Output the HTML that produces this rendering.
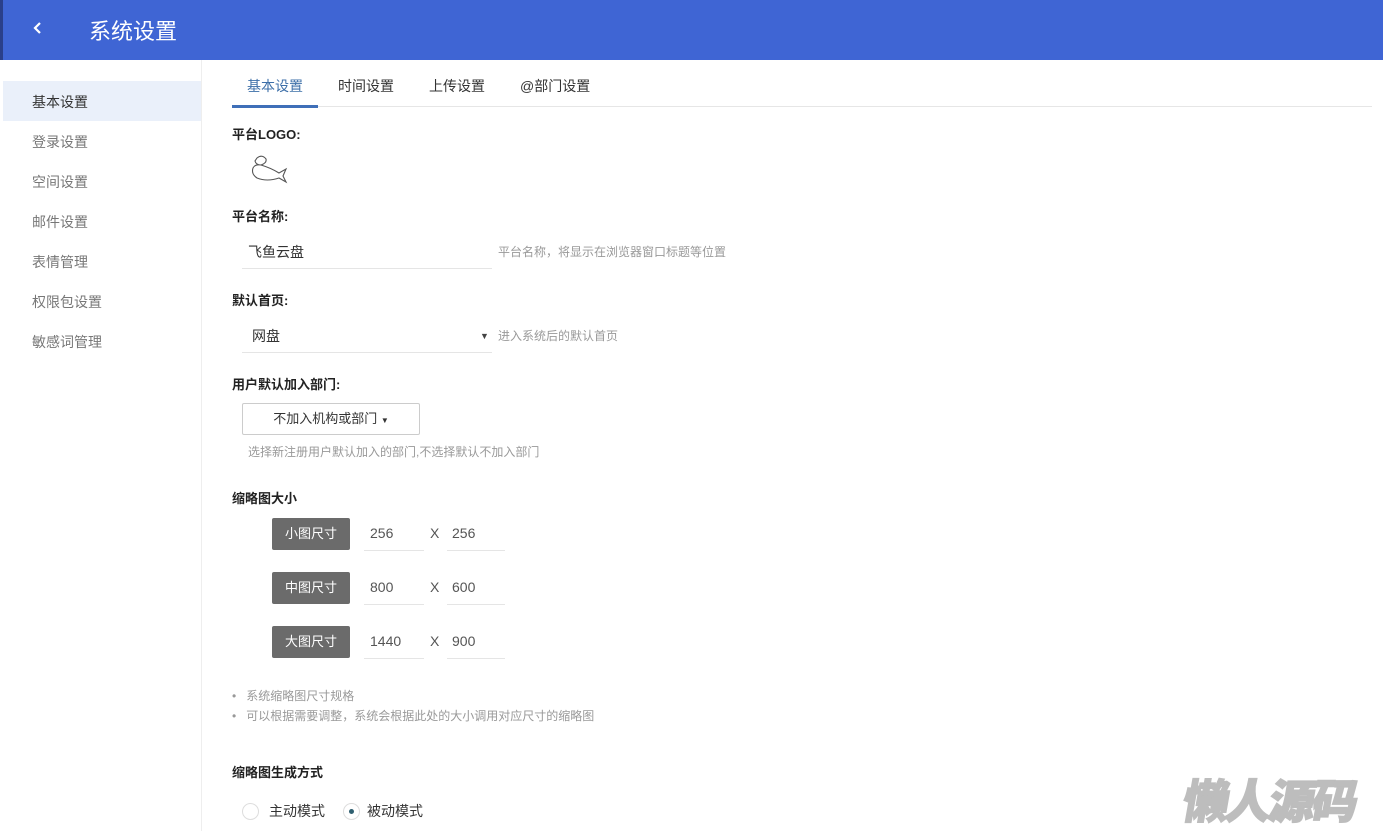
<!DOCTYPE html>
<html><head><meta charset="utf-8"><style>
*{margin:0;padding:0;box-sizing:border-box}
body{width:1383px;height:831px;overflow:hidden;background:#fff;font-family:"Liberation Sans","Noto Sans CJK SC",sans-serif;color:#333;position:relative;font-size:14px}
.a{position:absolute;white-space:nowrap}
.hdr{left:0;top:0;width:1383px;height:60px;background:#3f65d4;border-left:3px solid #2a3f8a}
.side{left:0;top:60px;width:202px;height:771px;border-right:1px solid #eee}
.si{left:32px;font-size:14px;color:#777}
.lbl{font-weight:bold;font-size:13px;color:#222;left:232px}
.line{height:1px;background:#e5e5e5}
.hint{font-size:12px;color:#999}
.btn{left:272px;width:78px;height:32px;background:#6b6b6b;border-radius:2px;color:#fff;font-size:13px;text-align:center;line-height:32px}
.num{font-size:14px;color:#555}
</style></head><body>
<div class="a hdr"></div>
<svg class="a" style="left:32px;top:20px" width="12" height="16" viewBox="0 0 12 16"><path d="M8 3 L3 8 L8 13" stroke="#fff" stroke-width="2.2" fill="none"/></svg>
<div class="a" style="left:89px;top:14px;font-size:22px;color:#fff">系统设置</div>
<div class="a side"></div>
<div class="a" style="left:3px;top:81px;width:198px;height:40px;background:#eaf0fa"></div>
<div class="a si" style="top:92px;color:#333">基本设置</div>
<div class="a si" style="top:132px">登录设置</div>
<div class="a si" style="top:172px">空间设置</div>
<div class="a si" style="top:212px">邮件设置</div>
<div class="a si" style="top:252px">表情管理</div>
<div class="a si" style="top:292px">权限包设置</div>
<div class="a si" style="top:332px">敏感词管理</div>
<div class="a" style="left:232px;top:106px;width:1140px;height:1px;background:#e6e6e6"></div>
<div class="a" style="left:232px;top:105px;width:86px;height:3px;background:#3f6fb8"></div>
<div class="a" style="left:247px;top:76px;color:#3d6fa8">基本设置</div>
<div class="a" style="left:338px;top:76px">时间设置</div>
<div class="a" style="left:429px;top:76px">上传设置</div>
<div class="a" style="left:520px;top:76px">@部门设置</div>
<div class="a lbl" style="top:124px">平台LOGO:</div>
<svg class="a" style="left:249px;top:154px" width="40" height="30" viewBox="0 0 40 30"><path d="M8 4 Q13 0 17 5 Q18 9 12 11 Q7 11 6 7 Z M4 14 Q6 10 12 11 Q22 14 30 19 L37 15 L34 22 L37 28 L30 24 Q18 28 8 24 Q2 20 4 14 Z" stroke="#555" stroke-width="1.1" fill="none"/></svg>
<div class="a lbl" style="top:206px">平台名称:</div>
<div class="a" style="left:248px;top:242px;color:#333">飞鱼云盘</div>
<div class="a line" style="left:242px;top:268px;width:250px"></div>
<div class="a hint" style="left:498px;top:243px">平台名称，将显示在浏览器窗口标题等位置</div>
<div class="a lbl" style="top:290px">默认首页:</div>
<div class="a" style="left:252px;top:326px">网盘</div>
<div class="a" style="left:480px;top:331px;font-size:9px;color:#444">▼</div>
<div class="a line" style="left:242px;top:352px;width:250px"></div>
<div class="a hint" style="left:498px;top:327px">进入系统后的默认首页</div>
<div class="a lbl" style="top:374px">用户默认加入部门:</div>
<div class="a" style="left:242px;top:403px;width:178px;height:32px;border:1px solid #ccc;border-radius:2px;text-align:center;line-height:29px;font-size:13px">不加入机构或部门 <span style="font-size:8px">▼</span></div>
<div class="a hint" style="left:248px;top:443px">选择新注册用户默认加入的部门,不选择默认不加入部门</div>
<div class="a lbl" style="top:488px">缩略图大小</div>
<div class="a btn" style="top:518px">小图尺寸</div>
<div class="a btn" style="top:572px">中图尺寸</div>
<div class="a btn" style="top:626px">大图尺寸</div>
<div class="a num" style="left:370px;top:525px">256</div><div class="a num" style="left:430px;top:525px">X</div><div class="a num" style="left:452px;top:525px">256</div>
<div class="a num" style="left:370px;top:579px">800</div><div class="a num" style="left:430px;top:579px">X</div><div class="a num" style="left:452px;top:579px">600</div>
<div class="a num" style="left:370px;top:633px">1440</div><div class="a num" style="left:430px;top:633px">X</div><div class="a num" style="left:452px;top:633px">900</div>
<div class="a line" style="left:364px;top:550px;width:60px"></div><div class="a line" style="left:447px;top:550px;width:58px"></div>
<div class="a line" style="left:364px;top:604px;width:60px"></div><div class="a line" style="left:447px;top:604px;width:58px"></div>
<div class="a line" style="left:364px;top:658px;width:60px"></div><div class="a line" style="left:447px;top:658px;width:58px"></div>
<div class="a hint" style="left:232px;top:687px">•&nbsp;&nbsp; 系统缩略图尺寸规格</div>
<div class="a hint" style="left:232px;top:707px">•&nbsp;&nbsp; 可以根据需要调整，系统会根据此处的大小调用对应尺寸的缩略图</div>
<div class="a lbl" style="top:762px">缩略图生成方式</div>
<div class="a" style="left:242px;top:803px;width:17px;height:17px;border:1px solid #ddd;border-radius:50%"></div>
<div class="a" style="left:269px;top:801px">主动模式</div>
<div class="a" style="left:343px;top:803px;width:17px;height:17px;border:1px solid #ddd;border-radius:50%"></div>
<div class="a" style="left:349px;top:809px;width:5px;height:5px;background:#2f5f70;border-radius:50%"></div>
<div class="a" style="left:367px;top:801px">被动模式</div>
<div class="a" style="left:1184px;top:766px;font-size:46px;font-weight:900;color:#bdbdbd;letter-spacing:-3px;transform:skewX(-10deg);-webkit-text-stroke:1.5px #bdbdbd">懒人源码</div>
</body></html>
